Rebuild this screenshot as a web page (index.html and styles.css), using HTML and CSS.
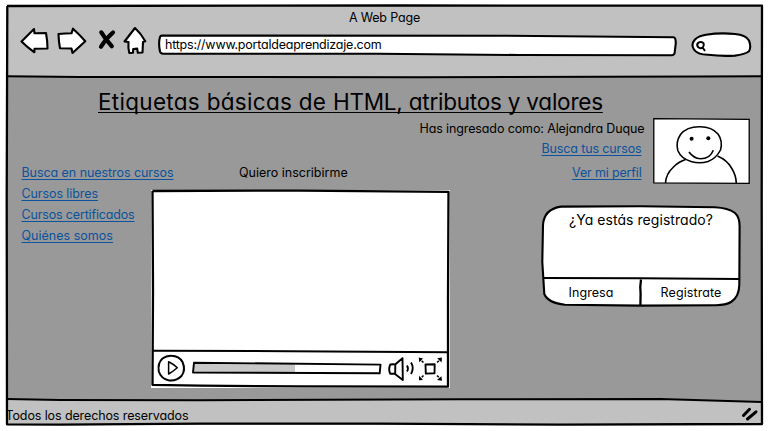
FILE: index.html
```html
<!DOCTYPE html>
<html lang="es">
<head>
<meta charset="utf-8">
<title>A Web Page</title>
<link rel="stylesheet" href="styles.css">
</head>
<body>
<div class="window">
  <svg class="frame" viewBox="0 0 768 431" aria-hidden="true">
    <path class="shade" d="M560 399L658 399L762 402L762 398L560 398Z"/>
    <path class="edge" d="M7 6L400 5.5L762 5.6L761.7 200L762 424L560 424.6L380 423.6L200 423.6L60 424.6L7 424.3L6.7 200L7.3 6"/>
    <path class="rule" d="M7 76.2L80 77L420 77.2L700 76.6L762 76.3M7 399L60 400L200 400.3L460 399.2L660 399L762 402"/>
  </svg>

  <header class="chrome">
    <div class="window-title">A Web Page</div>
    <div class="toolbar">
      <svg class="nav-icons" viewBox="20 25 128 31" aria-hidden="true">
        <g class="sketch">
          <path d="M21.5 41.5L34 29L34.5 33.3L46 33Q47.5 41 47.5 48.5L34.5 48.8L34.4 52.3Q27 47 21.5 41.5Z"/>
          <path d="M58.5 34Q65 33.5 71.5 33.3L73 28.7Q80 35 85.3 41.3L72.5 53L71.5 48.5L60 48.3Q58.7 42 58.5 34Z"/>
          <path d="M135 28L124.5 41.5L128.5 42Q128 48 129.3 53L133 52.8L133.2 49L137.2 48.6L137.8 52.8L142.5 52.5L143 42L145.3 41.3Q141 33.5 135 28Z"/>
        </g>
        <path class="stop" d="M101.3 32.4Q106 40 111.8 46.2M113 32.5Q105.5 39 101 46.8"/>
      </svg>
      <div class="address">
        <svg class="outline" viewBox="0 0 520 24" aria-hidden="true">
          <path class="sketch" d="M4 2.5Q2 2.6 1.7 5Q.4 11 2 18.5Q2.5 20.5 5 20.7L220 20.8L360 22L514 22.2Q516.5 22 516.7 19.5L517.8 10Q517.7 4.5 515.5 4.3L350 2.8Z"/>
        </svg>
        <span class="url">https://www.portaldeaprendizaje.com</span>
      </div>
      <svg class="search" viewBox="690 31 62 28" aria-hidden="true">
        <path class="sketch" d="M706 34.8Q720 32.5 735 34Q746 35 749 40.5Q751.5 47 749 51.3Q745 54.5 735 55.6Q722 56.5 708 54.8Q697 54.5 694 49.5Q690.5 44.5 695 39.5Q699 35.8 706 34.8Z"/>
        <path class="lens" d="M703.5 43.2Q701 41.2 698.5 42.6Q696.2 44.5 698 47Q700.5 49.2 702.8 47.4Q704.6 45.2 703.5 43.2ZM702.6 47.5L705 51"/>
      </svg>
    </div>
  </header>

  <main class="page">
    <h1><span class="wide">Etiquetas básicas de </span><span class="tight">HTML, atributos y valores</span></h1>
    <div class="columns">
      <nav class="side-links">
        <a class="t-courses" href="#">Busca en nuestros cursos</a>
        <a class="t-free" href="#">Cursos libres</a>
        <a class="t-cert" href="#">Cursos certificados</a>
        <a class="t-about" href="#">Quiénes somos</a>
      </nav>

      <section class="content">
        <div class="enroll">Quiero inscribirme</div>
        <svg class="player" viewBox="151 189 300 199" aria-label="Video">
          <path class="paper" d="M151 190L450 190L450 388L151 388Z"/>
          <path class="edge" d="M152.5 191L300 190.6L448.5 191.8L448 300L448 386.7L300 386.4L200 385.6L152.5 384.8L153 290L152.5 191"/>
          <path class="rule" d="M152 350.8L290 351.2L448 352.2"/>
          <path class="loaded" d="M194 363L295 363.5L295 373L193 372.5Z"/>
          <path class="line" d="M194 362.7L380.5 364.6L379.7 373.3L193 372.5Z"/>
          <path class="ring" d="M171.5 355.8Q179 356 182.5 362Q186 370 181.5 376Q176 381.5 168.5 380.3Q161 378.5 158.8 371.5Q157.5 363 162.5 358.5Q166.5 355.5 171.5 355.8Z"/>
          <path class="thin" d="M168.6 361.7L168.6 374Q173 371.5 177.3 367.8Q173.5 364 168.6 361.7Z"/>
          <path class="line" d="M395.5 364.3Q398.5 361.5 402.5 358.2L402.8 380L395 374M390.3 364.5Q393 364 395.3 364.4L395.2 373.7L390.3 373.8Q388 369.5 390.3 364.5Z"/>
          <path class="line" d="M407 365.5Q408.8 368.5 407 371.5M411 362.5Q414.5 368 411 374"/>
          <path class="line" d="M425.5 364.5L434.7 364.2L434.5 373.3L425.8 373.6Z"/>
          <path class="thin dashes" d="M423.5 362.5L419.5 359M437 362.5L441 359M423.5 375.5L419.5 379.5M437 375.5L441 379.5"/>
          <path d="M418.7 357.6L423 358.6L419.3 362.3ZM441.9 357.6L437.2 358.2L441.6 362.4ZM419 380.3L419 375.8L423 379.9ZM442 380.8L441.4 376.2L437 380Z"/>
        </svg>
      </section>

      <aside class="account">
        <div class="profile">
          <div class="profile-text">
            <span class="user">Has ingresado como: Alejandra Duque</span>
            <a class="t-find" href="#">Busca tus cursos</a>
            <a class="t-profile" href="#">Ver mi perfil</a>
          </div>
          <svg class="avatar" viewBox="652 117 99 67" aria-hidden="true">
            <path class="photo" d="M653.8 118.7L749.2 119.3L749.2 183.3L653.8 182.8Z"/>
            <g class="person">
              <path d="M665.5 183Q666 174 673 167.5Q678 162 685.5 159.5M717.5 156Q727 160 731.5 168Q736 175 736.3 183"/>
              <path d="M700 126.8Q712 127 718 134Q723 141 720.5 150Q716 158.5 708 161.5Q700 164 691 161.5Q681 158.5 677.8 150.5Q675.5 142 680.5 134.5Q687 126.5 700 126.8Z"/>
              <path d="M689 152Q693.5 158.3 700.5 158.8Q710 158.8 713.3 150.2"/>
            </g>
            <circle cx="691.6" cy="138.7" r="2"/><circle cx="708.3" cy="138.3" r="2"/>
          </svg>
        </div>

        <div class="dialog">
          <svg class="outline" viewBox="541 204 200 103" aria-hidden="true">
            <path class="sketch" d="M561 206.6L640 206.3L715 207.3Q728 208 735 213Q739.5 217 739.6 226L739.3 285Q739 297 731 302Q726 305 716 305.2L640 305.6L565 304.7Q548 303 544.3 294L542.3 262L543 225Q544 209 561 206.6Z"/>
            <path class="rule" d="M543 278L640 278.2L739 279"/>
            <path class="rule thick" d="M641 279.5Q639.8 287 640.6 293L640.4 305"/>
          </svg>
          <div class="question">¿Ya estás registrado?</div>
          <div class="actions">
            <span class="t-login">Ingresa</span>
            <span class="t-signup">Registrate</span>
          </div>
        </div>
      </aside>
    </div>
  </main>

  <footer class="status">
    <span class="rights">Todos los derechos reservados</span>
    <svg class="grip" viewBox="741 406 19 16" aria-hidden="true">
      <path d="M743.5 415.5L749.5 409.3M747.5 419L756 411.8"/>
    </svg>
  </footer>
</div>
</body>
</html>
```
FILE: styles.css
```css
* { box-sizing: border-box; }

html { background: #fff; }

body {
  margin: 0;
  padding: 6px 6px 6px 7px;
  height: 431px;
  color: #000;
  font: 12.5px/20px Inter, "Noto Sans", sans-serif;
  font-feature-settings: "cv11";
  white-space: nowrap;
}

svg { display: block; flex: none; }

.window {
  position: relative;
  height: 419px;
  display: grid;
  grid-template-rows: 71px 323px 25px;
}

.frame {
  position: absolute;
  z-index: 1;
  left: -7px;
  top: -6px;
  width: 768px;
  height: 431px;
  pointer-events: none;
}

.shade { fill: #999; }
.edge { fill: none; stroke: #000; stroke-width: 2.3; stroke-linejoin: round; }
.rule { fill: none; stroke: #000; stroke-width: 2; }
.sketch { fill: #fff; stroke: #000; stroke-width: 2.1; stroke-linejoin: round; }
.line { fill: none; stroke: #000; stroke-width: 1.9; stroke-linejoin: round; }
.ring { fill: #fff; stroke: #000; stroke-width: 2; }
.thin { fill: none; stroke: #000; stroke-width: 1.5; stroke-linejoin: round; }
.thick { stroke-width: 2.3; }
.stop { fill: none; stroke: #000; stroke-width: 4.2; stroke-linecap: round; }
.outline { position: absolute; inset: 0; width: 100%; height: 100%; }

/* Browser chrome */
.chrome { background: #c1c1c1; padding-top: 2px; }

.window-title {
  text-align: center;
  letter-spacing: -.18px;
  line-height: 20px;
}

.toolbar {
  display: flex;
  align-items: flex-start;
  padding-left: 13px;
}

.nav-icons { width: 128px; height: 31px; margin-top: -3px; }

.address {
  position: relative;
  width: 520px;
  height: 24px;
  margin: 5px 0 0 10px;
  padding: 2px 0 0 7px;
}

.url { position: relative; letter-spacing: -.22px; }

.search { width: 62px; height: 28px; margin: 3px 0 0 12px; }
.lens { fill: none; stroke: #000; stroke-width: 2; }

/* Page */
.page { background: #999; padding-top: 11px; }

h1 {
  margin: 0 0 0 91px;
  font-size: 22.5px;
  font-weight: 400;
  line-height: 28px;
  text-decoration: underline;
  text-decoration-thickness: 1px;
  text-underline-offset: 2px;
  text-decoration-skip-ink: none;
}

.wide { letter-spacing: .3px; }
.tight { letter-spacing: -.22px; }

.columns {
  display: grid;
  grid-template-columns: 130px 267px 1fr;
  padding-left: 14px;
}

a {
  color: #0b539c;
  text-decoration-thickness: 1px;
  text-underline-offset: 2px;
  text-decoration-skip-ink: none;
}

.side-links {
  display: flex;
  flex-direction: column;
  align-items: flex-start;
  gap: 1px;
  padding: 47px 0 0 .5px;
}

.content { padding-top: 47px; }
.enroll { margin-left: 88px; }
.player { width: 300px; height: 199px; margin-top: 6px; }
.paper { fill: #fff; }
.loaded { fill: #c8c8c8; }
.dashes { stroke-dasharray: 2.5 1; }

.account { padding-top: 1px; }
.profile { display: flex; justify-content: flex-end; padding-right: 11px; }

.profile-text {
  display: flex;
  flex-direction: column;
  align-items: flex-end;
  padding: 2px 10.5px 0 0;
}

.user { margin-right: -3px; letter-spacing: -.117px; }
.t-find { letter-spacing: -.127px; }
.t-profile { margin-top: 4px; letter-spacing: -.16px; }
.t-courses { letter-spacing: -.06px; }
.t-free { letter-spacing: -.08px; }
.t-cert { letter-spacing: -.16px; }
.t-about { letter-spacing: .02px; }
.t-login { letter-spacing: .08px; }
.t-signup { letter-spacing: .1px; }

.avatar { width: 99px; height: 67px; }
.photo { fill: #fff; stroke: #000; stroke-width: 1.3; }
.person { fill: none; stroke: #000; stroke-width: 1.6; }
.person path:nth-child(2) { fill: #fff; }

.dialog {
  position: relative;
  width: 200px;
  height: 103px;
  margin: 20px 21px 0 auto;
}

.question {
  position: relative;
  padding-top: 6px;
  font-size: 14px;
  line-height: 20px;
  letter-spacing: .05px;
  text-align: center;
}

.actions {
  position: relative;
  display: grid;
  grid-template-columns: 1fr 1fr;
  padding-top: 53px;
  text-align: center;
}

/* Status bar */
.status {
  display: flex;
  justify-content: space-between;
  align-items: flex-start;
  background: #c1c1c1;
}

.rights { margin: 6px 0 0 -1.5px; letter-spacing: -.11px; }

.grip {
  width: 19px;
  height: 16px;
  margin: 6px 2px 0 0;
  fill: none;
  stroke: #000;
  stroke-width: 3;
  stroke-linecap: round;
}
```
